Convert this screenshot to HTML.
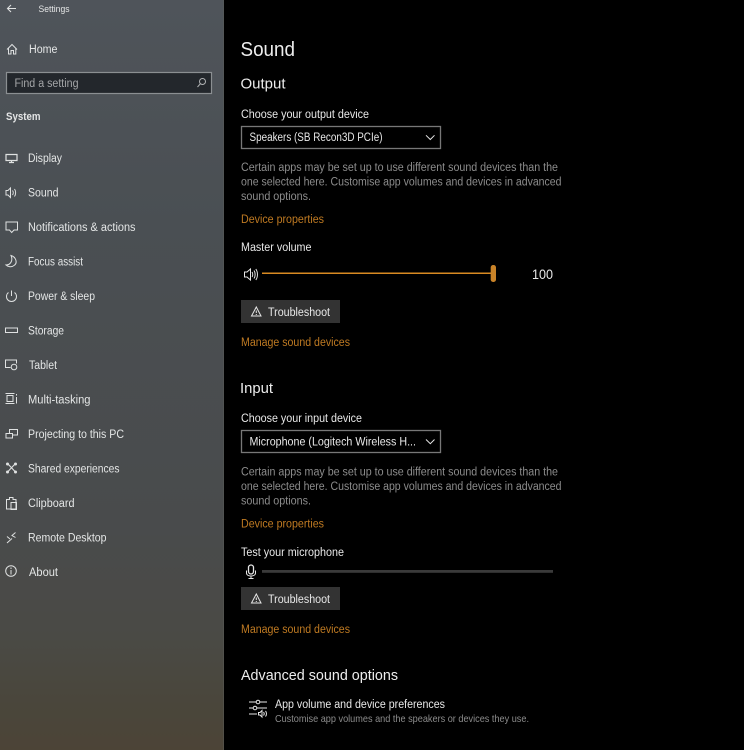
<!DOCTYPE html>
<html lang="en"><head><meta charset="utf-8"><title>Settings - Sound</title>
<style>
html,body{margin:0;padding:0;background:#000;width:744px;height:750px;overflow:hidden}
svg{display:block;filter:blur(.3px)}
text{font-family:"Liberation Sans",sans-serif;fill:#e8e8e8;font-size:11.5px}
.n text{fill:#e4e6e6}
.g{fill:#8c8c8c}
.o{fill:#bf7a22}
.i{fill:none;stroke:#dfe1e1;stroke-width:1}
.w{fill:none;stroke:#e6e6e6;stroke-width:1}
</style></head><body>
<svg width="744" height="750" viewBox="0 0 744 750" xmlns="http://www.w3.org/2000/svg">
<defs>
<linearGradient id="bg" x1="0" y1="0" x2="0" y2="1">
<stop offset="0" stop-color="#4f545a"/><stop offset=".3" stop-color="#4a4f53"/><stop offset=".7" stop-color="#494b4c"/><stop offset=".85" stop-color="#4a4a45"/><stop offset=".94" stop-color="#4a463b"/><stop offset="1" stop-color="#4c4437"/>
</linearGradient>
</defs>
<rect width="744" height="750" fill="#000"/>
<rect width="224" height="750" fill="url(#bg)"/>
<rect x="223" width="1" height="750" fill="#5a5c58" opacity=".5"/>

<!-- search -->
<rect x="6.500" y="72.500" width="205" height="21" fill="#23272c" stroke="#8b8f92" stroke-width="1.200"/>
<circle cx="202.500" cy="81.500" r="3" class="i" style="stroke:#b0b2b4"/><path d="M200.300 83.800L197.500 87" class="i" style="stroke:#b0b2b4"/>

<g class="n">
<text x="38.500" y="12" style="font-size:9.500px" textLength="31" lengthAdjust="spacingAndGlyphs">Settings</text>
<text x="29" y="53" textLength="28.500" lengthAdjust="spacingAndGlyphs">Home</text>
<text x="14.500" y="87" style="fill:#a4a6a8" textLength="64" lengthAdjust="spacingAndGlyphs">Find a setting</text>
<text x="6" y="120" style="font-weight:bold;font-size:11px" textLength="34.500" lengthAdjust="spacingAndGlyphs">System</text>
<text x="28" y="162" textLength="34" lengthAdjust="spacingAndGlyphs">Display</text>
<text x="28" y="196.500" textLength="30.500" lengthAdjust="spacingAndGlyphs">Sound</text>
<text x="28" y="231" textLength="107.500" lengthAdjust="spacingAndGlyphs">Notifications &amp; actions</text>
<text x="28" y="265.500" textLength="55" lengthAdjust="spacingAndGlyphs">Focus assist</text>
<text x="28" y="300" textLength="67" lengthAdjust="spacingAndGlyphs">Power &amp; sleep</text>
<text x="28" y="334.500" textLength="36" lengthAdjust="spacingAndGlyphs">Storage</text>
<text x="29" y="369" textLength="28" lengthAdjust="spacingAndGlyphs">Tablet</text>
<text x="28" y="403.500" textLength="62.500" lengthAdjust="spacingAndGlyphs">Multi-tasking</text>
<text x="28" y="438" textLength="96" lengthAdjust="spacingAndGlyphs">Projecting to this PC</text>
<text x="28" y="472.500" textLength="91.500" lengthAdjust="spacingAndGlyphs">Shared experiences</text>
<text x="28" y="507" textLength="46.500" lengthAdjust="spacingAndGlyphs">Clipboard</text>
<text x="28" y="541.500" textLength="78.500" lengthAdjust="spacingAndGlyphs">Remote Desktop</text>
<text x="29" y="576" textLength="29" lengthAdjust="spacingAndGlyphs">About</text>
</g>

<!-- back + sidebar icons -->
<path d="M16 8.500H7.500M11 5L7.500 8.500L11 12" class="i" style="stroke-width:1.100"/>
<path d="M7 49.500L12 44.500L17 49.500M8.500 48.200V54H11V50.500H13.500V54H15.800V48.200" class="i"/>
<path d="M6 154.500H17V160.500H6ZM9 162.500H14M11.500 160.500V162.500" class="i" style="stroke-width:1.200"/>
<path d="M6 190.500H8L10.500 188V197.500L8 195H6Z M12.500 190.500C13.500 191.800 13.500 193.700 12.500 195M14.500 189C16 191 16 194.500 14.500 196.500" class="i"/>
<path d="M6 222H17.500V230H14L11.700 232.500L9.500 230H6Z" class="i"/>
<path d="M11 255.500C16 257 18 263 14 265.500C11.500 267.500 8 267 6 265C10 265 13.500 261 11 255.500Z" class="i"/>
<path d="M11.500 290.500V296M8.500 292.500A5 5 0 1 0 14.500 292.500" class="i"/>
<rect x="5.500" y="328" width="12" height="4.500" class="i"/>
<path d="M10.500 367.500H5.500V360H16.500V363.500" class="i"/><circle cx="14" cy="367" r="2.800" class="i"/>
<path d="M5.500 393.500H14.500M5.500 403.500H14.500M7 395.500H13V401.500H7ZM16.500 394V395.500M16.500 397V403.500" class="i"/>
<path d="M6 438V433.500H12.500V438ZM9.500 433V429.500H17.500V435H13" class="i"/>
<path d="M8 464L15 471.500M15 464L8 471.500" class="i" style="stroke-width:1.100"/>
<g fill="#dfe1e1"><circle cx="7.500" cy="464" r="1.500"/><circle cx="15.500" cy="464" r="1.500"/><circle cx="7.500" cy="472" r="1.500"/><circle cx="15.500" cy="472" r="1.500"/></g>
<path d="M6.500 499.500H9.500V497.500H13V499.500H16V509H6.500ZM11 502.500H16.500V509.500H11Z" class="i"/>
<path d="M7 543L12 538.500M7 536.500L10 539M15.500 532.500L12 535.500L15.500 537.500" class="i"/>
<circle cx="11" cy="571" r="5.300" class="i"/><path d="M11 570V574.500M11 567.500V569" class="i"/>

<!-- main -->
<text x="240.500" y="56" style="font-size:20px;fill:#ededed" textLength="54.500" lengthAdjust="spacingAndGlyphs">Sound</text>
<text x="240.500" y="88.500" style="font-size:15px;fill:#ededed" textLength="45" lengthAdjust="spacingAndGlyphs">Output</text>
<text x="241" y="118" textLength="128" lengthAdjust="spacingAndGlyphs">Choose your output device</text>
<rect x="241.500" y="126.500" width="199" height="22" fill="#000" stroke="#777" stroke-width="1.300"/>
<text x="249.500" y="141" textLength="133" lengthAdjust="spacingAndGlyphs">Speakers (SB Recon3D PCIe)</text>
<path d="M426 135.300L430.300 139.500L434.500 135.300" class="w"/>
<text class="g" x="241" y="171" textLength="317" lengthAdjust="spacingAndGlyphs">Certain apps may be set up to use different sound devices than the</text>
<text class="g" x="241" y="185.500" textLength="320.500" lengthAdjust="spacingAndGlyphs">one selected here. Customise app volumes and devices in advanced</text>
<text class="g" x="241" y="200" textLength="70" lengthAdjust="spacingAndGlyphs">sound options.</text>
<text class="o" x="241" y="223" textLength="83" lengthAdjust="spacingAndGlyphs">Device properties</text>
<text x="241" y="251" textLength="70.500" lengthAdjust="spacingAndGlyphs">Master volume</text>
<path d="M244.500 272H247L250.500 269V280L247 277H244.500Z M252 272C253 273.500 253 275.700 252 277M254 270.500C255.500 272.800 255.500 276.500 254 278.500M255.800 269C258 272 258 277 255.800 280" class="w"/>
<rect x="262" y="272.500" width="230" height="1.500" fill="#d98a22"/>
<rect x="490.700" y="265" width="5.300" height="17" rx="2.400" fill="#c98328"/>
<text x="532" y="279" style="font-size:14px" textLength="21" lengthAdjust="spacingAndGlyphs">100</text>
<rect x="241" y="300" width="99" height="23" fill="#333"/>
<path d="M256.300 307L261 316H251.500ZM256.300 310.500V313M256.300 314V315" class="w"/>
<text x="268" y="316" textLength="62" lengthAdjust="spacingAndGlyphs">Troubleshoot</text>
<text class="o" x="241" y="346" textLength="109" lengthAdjust="spacingAndGlyphs">Manage sound devices</text>

<text x="240" y="393" style="font-size:15px;fill:#ededed" textLength="33" lengthAdjust="spacingAndGlyphs">Input</text>
<text x="241" y="422" textLength="121" lengthAdjust="spacingAndGlyphs">Choose your input device</text>
<rect x="241.500" y="430.500" width="199" height="22" fill="#000" stroke="#777" stroke-width="1.300"/>
<text x="249.500" y="445.500" textLength="166.500" lengthAdjust="spacingAndGlyphs">Microphone (Logitech Wireless H...</text>
<path d="M426 439.500L430.300 443.700L434.500 439.500" class="w"/>
<text class="g" x="241" y="475.500" textLength="317" lengthAdjust="spacingAndGlyphs">Certain apps may be set up to use different sound devices than the</text>
<text class="g" x="241" y="490" textLength="320.500" lengthAdjust="spacingAndGlyphs">one selected here. Customise app volumes and devices in advanced</text>
<text class="g" x="241" y="504.500" textLength="70" lengthAdjust="spacingAndGlyphs">sound options.</text>
<text class="o" x="241" y="527.500" textLength="83" lengthAdjust="spacingAndGlyphs">Device properties</text>
<text x="241" y="556" textLength="103" lengthAdjust="spacingAndGlyphs">Test your microphone</text>
<rect x="248.500" y="565" width="5" height="9" rx="2.500" class="w" style="stroke-width:1.300"/>
<path d="M246.500 570.500V573C246.500 575 248.500 576 251 576S255.500 575 255.500 573V570.500M251 576V578M248.500 578.500H253.500" class="w"/>
<rect x="262" y="570" width="291" height="2.800" fill="#3a3a3a"/>
<rect x="241" y="587" width="99" height="23" fill="#333"/>
<path d="M256.300 594L261 603H251.500ZM256.300 597.500V600M256.300 601V602" class="w"/>
<text x="268" y="603" textLength="62" lengthAdjust="spacingAndGlyphs">Troubleshoot</text>
<text class="o" x="241" y="633" textLength="109" lengthAdjust="spacingAndGlyphs">Manage sound devices</text>

<text x="241" y="680" style="font-size:15px;fill:#ededed" textLength="157" lengthAdjust="spacingAndGlyphs">Advanced sound options</text>
<path d="M249 702H256M260 702H267M249 708H253M257 708H267M249 714H257" class="w"/>
<circle cx="258" cy="702" r="1.800" class="w"/><circle cx="255" cy="708" r="1.800" class="w"/>
<path d="M258.500 712.500H260L262 710.500V717L260 715H258.500ZM263.500 712C264.300 713 264.300 714.500 263.500 715.500M265.500 711C266.800 712.500 266.800 715 265.500 716.500" class="w"/>
<text x="275" y="708" textLength="170" lengthAdjust="spacingAndGlyphs">App volume and device preferences</text>
<text class="g" x="275" y="722" style="font-size:10.500px" textLength="254" lengthAdjust="spacingAndGlyphs">Customise app volumes and the speakers or devices they use.</text>
</svg>
</body></html>
